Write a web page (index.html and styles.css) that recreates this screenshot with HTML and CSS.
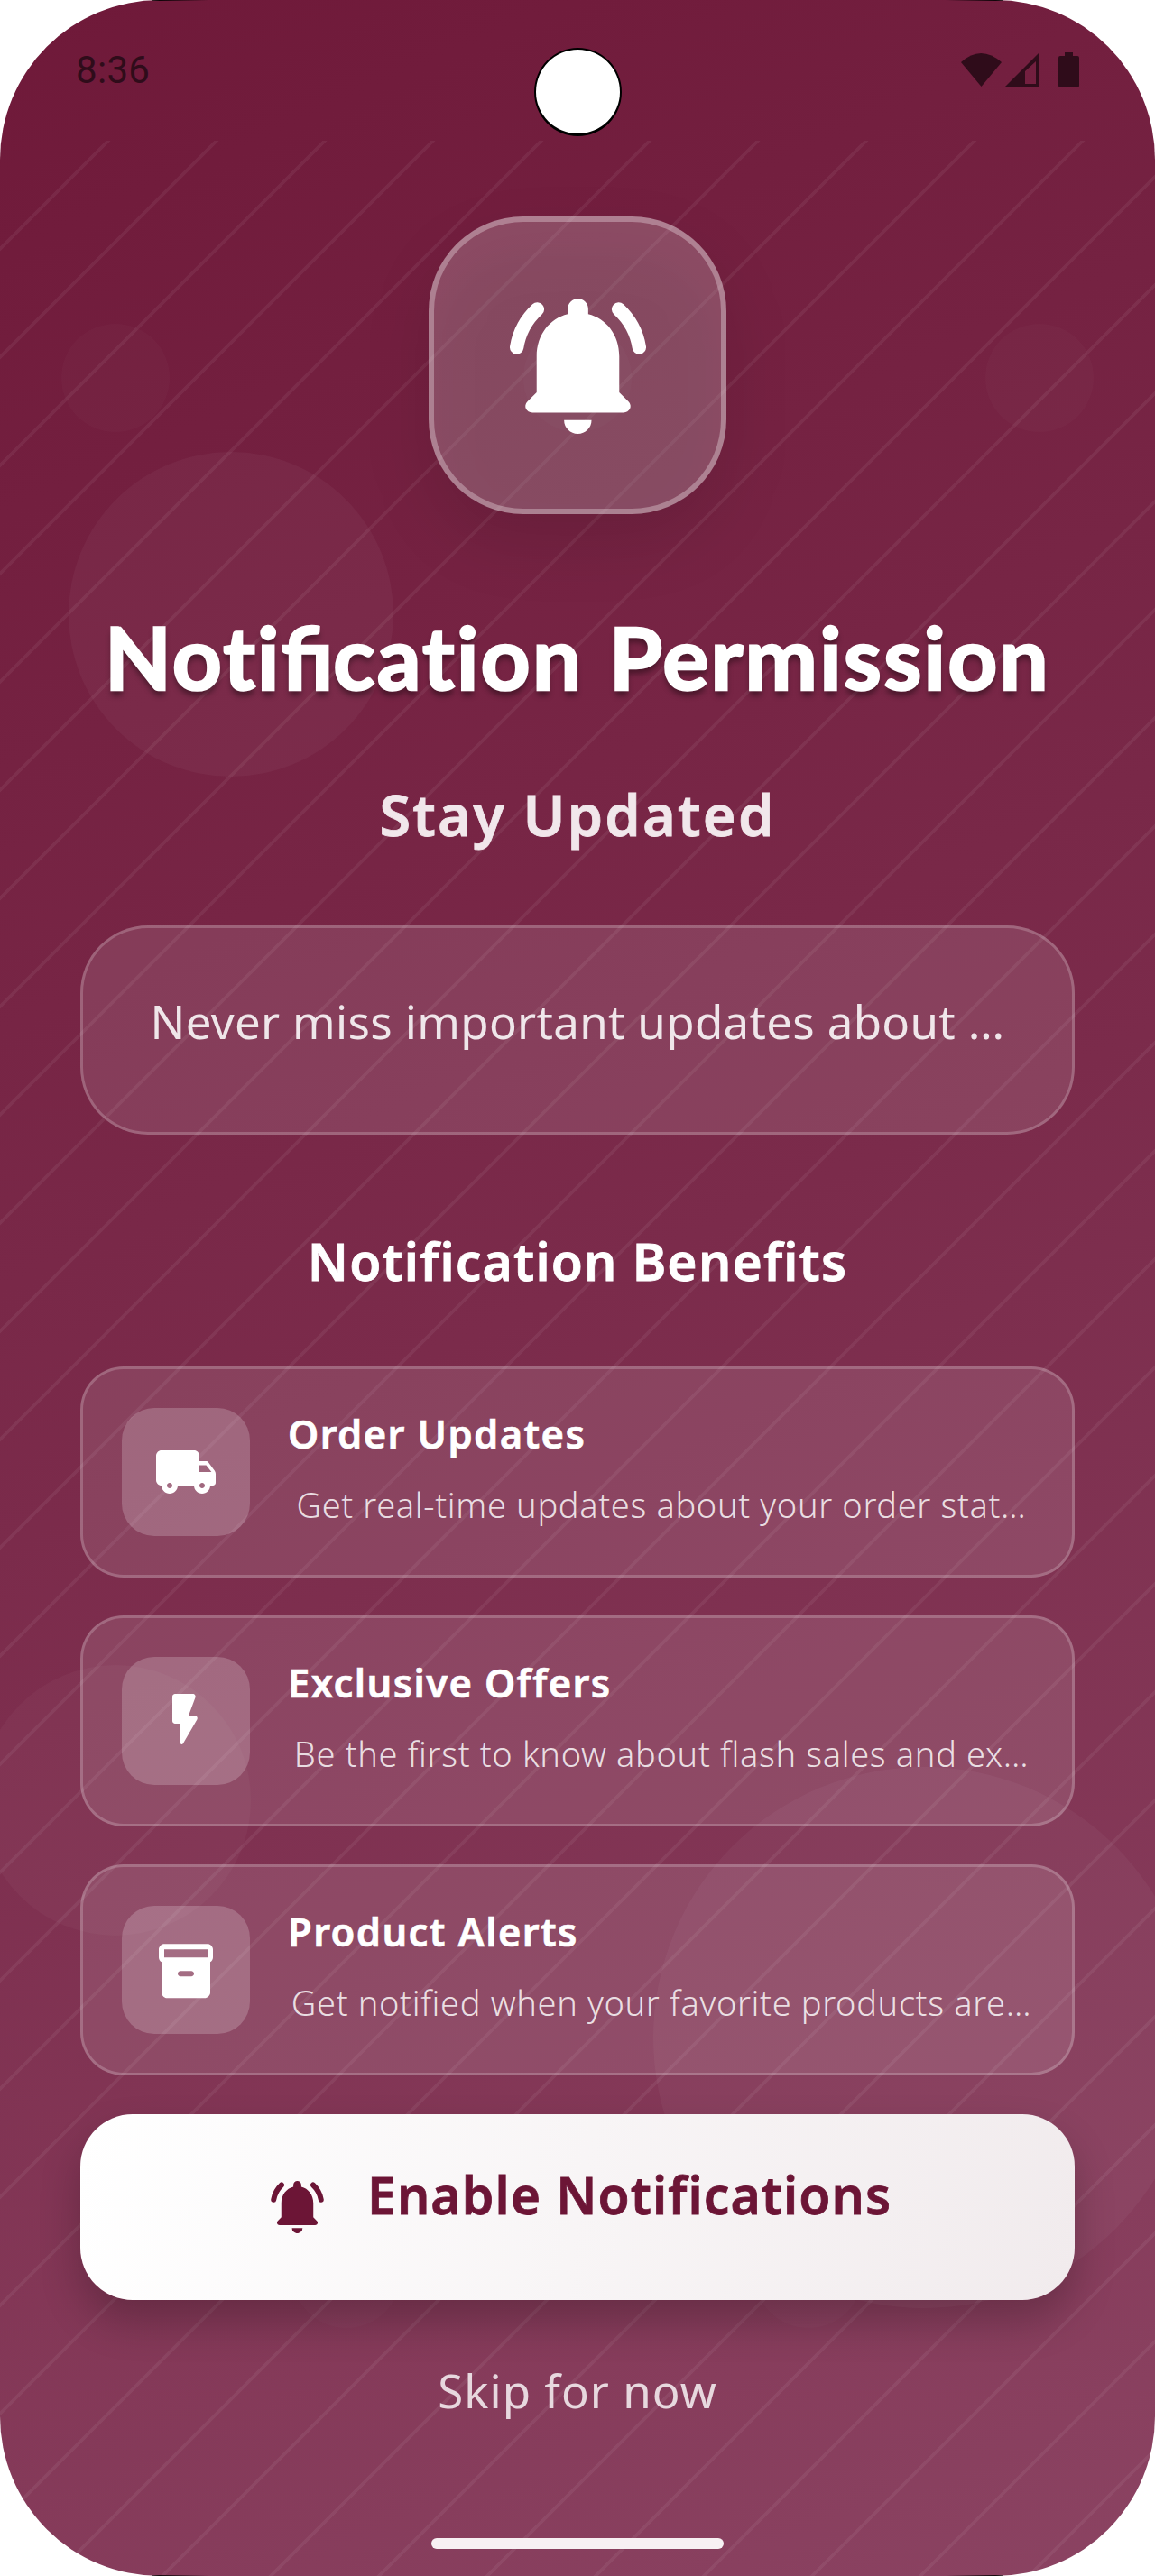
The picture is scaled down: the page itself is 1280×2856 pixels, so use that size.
FILE: index.html
```
<!DOCTYPE html>
<html lang="en">
<head>
<meta charset="utf-8">
<title>Notification Permission</title>
<link rel="stylesheet" href="styles.css">
</head>
<body>
<div class="phone">
  <svg class="backdrop" viewBox="0 0 1280 2856" aria-hidden="true">
    <defs>
      <pattern id="stripes" width="120" height="120" patternUnits="userSpaceOnUse" y="156">
        <path d="M-10 130 L130 -10 M-10 10 L10 -10 M110 130 L130 110" stroke="#fff" stroke-opacity=".06" stroke-width="3.5"/>
      </pattern>
      <linearGradient id="edge"><stop offset="0" stop-color="#000"/><stop offset="1" stop-color="#000" stop-opacity="0"/></linearGradient>
    </defs>
    <rect y="156" width="1280" height="2700" fill="url(#stripes)"/>
    <g fill="#fff">
      <circle cx="256" cy="681" r="180" fill-opacity=".04"/>
      <circle cx="1024" cy="2259" r="300" fill-opacity=".04"/>
      <circle cx="128" cy="1996" r="150" fill-opacity=".03"/>
      <circle cx="128" cy="419" r="60" fill-opacity=".02"/>
      <circle cx="640" cy="419" r="60" fill-opacity=".02"/>
      <circle cx="1152" cy="419" r="60" fill-opacity=".02"/>
      <circle cx="384" cy="2521" r="60" fill-opacity=".02"/>
      <circle cx="896" cy="2521" r="60" fill-opacity=".02"/>
    </g>
    <rect x="168" width="64" height="1" fill="url(#edge)"/>
    <rect x="-1112" width="64" height="1" fill="url(#edge)" transform="scale(-1 1)"/>
    <rect x="168" y="2855" width="64" height="1" fill="url(#edge)"/>
    <rect x="-1112" y="2855" width="64" height="1" fill="url(#edge)" transform="scale(-1 1)"/>
  </svg>

  <svg class="symbols" aria-hidden="true">
    <symbol id="bell" viewBox="315 335 452 448">
      <path fill="currentColor" d="M541 335a34 34 0 0 1 34 34v17c60 15 103 68 103 140v120l30 30c16 16 4 37-16 37H390c-20 0-32-21-16-37l30-30V526c0-72 43-125 103-140v-17a34 34 0 0 1 34-34zM495 738h91a45.500 45.500 0 0 1-91 0z"/>
      <path fill="none" stroke="currentColor" stroke-width="46" stroke-linecap="round" d="M338 496Q350 422 406 370M744 496Q732 422 676 370"/>
    </symbol>
  </svg>

  <header class="status">
    <span class="time">8:36</span>
    <span class="camera"></span>
    <svg class="indicators" viewBox="0 0 132 40">
      <path d="M0 11Q22-9 45 11L22.500 38z"/>
      <path fill-rule="evenodd" d="M49 38L86 1V38zM71 35H83V10L71 21z"/>
      <path d="M115 0h9v4h5q2 0 2 2v31q0 2-2 2h-19q-2 0-2-2v-31q0-2 2-2h5z"/>
    </svg>
  </header>

  <main class="content">
    <div class="hero"><svg><use href="#bell"/></svg></div>
    <h1>Noti<span class="ligature">fi</span>cation Permission</h1>
    <p class="subtitle">Stay Updated</p>
    <div class="message">Never miss important updates about …</div>
    <h2>Notification Benefits</h2>

    <ul class="benefits">
      <li class="card">
        <span class="tile"><svg viewBox="0 0 24 24"><path d="M19.500 8H17V6c0-1.100-.9-2-2-2H3c-1.100 0-2 .9-2 2v9c0 1.100.9 2 2 2 0 1.660 1.340 3 3 3s3-1.340 3-3h6c0 1.660 1.340 3 3 3s3-1.340 3-3h1c.55 0 1-.45 1-1v-3.330c0-.43-.14-.85-.4-1.200L20.300 8.400c-.19-.25-.49-.4-.8-.4zM6 18c-.55 0-1-.45-1-1s.45-1 1-1 1 .45 1 1-.45 1-1 1zm13.500-8.500l1.960 2.500H17V9.500h2.500zM18 18c-.55 0-1-.45-1-1s.45-1 1-1 1 .45 1 1-.45 1-1 1z"/></svg></span>
        <div class="copy"><h3>Order Updates</h3><p>Get real-time updates about your order stat…</p></div>
      </li>
      <li class="card">
        <span class="tile"><svg viewBox="0 0 24 24"><path d="M7 3v9c0 .55.45 1 1 1h2v7.150c0 .51.67.69.93.25l5.190-8.900c.39-.67-.09-1.500-.86-1.500H13l2.490-6.650C15.740 2.700 15.260 2 14.560 2H8c-.55 0-1 .45-1 1z"/></svg></span>
        <div class="copy"><h3>Exclusive Offers</h3><p>Be the first to know about flash sales and ex…</p></div>
      </li>
      <li class="card">
        <span class="tile"><svg viewBox="0 -.4 24 24"><path d="M20 2H4c-1 0-2 .9-2 2v3.010c0 .72.43 1.340 1 1.690V20c0 1.100 1.100 2 2 2h14c.9 0 2-.9 2-2V8.700c.57-.35 1-.97 1-1.690V4c0-1.100-1-2-2-2zm-6 12h-4c-.55 0-1-.45-1-1s.45-1 1-1h4c.55 0 1 .45 1 1s-.45 1-1 1zm6-7H4V4h16v3z"/></svg></span>
        <div class="copy"><h3>Product Alerts</h3><p>Get notified when your favorite products are…</p></div>
      </li>
    </ul>

    <button class="enable"><svg><use href="#bell"/></svg><span>Enable Notifications</span></button>
    <a class="skip">Skip for now</a>
  </main>
  <div class="home-bar"></div>
</div>
</body>
</html>
```
FILE: styles.css
```
* { box-sizing: border-box; }
body { margin: 0; background: #fff; font-family: "Noto Sans", sans-serif; color: #fff; }
h1, h2, h3, p, ul { margin: 0; padding: 0; }

.phone {
  position: relative;
  display: flex;
  flex-direction: column;
  width: 1280px;
  height: 2856px;
  overflow: hidden;
  border-radius: 177px;
  background: linear-gradient(155.860deg, #6f1939, #7b2b4b 50%, #8b4362);
}
.backdrop { position: absolute; inset: 0; width: 1280px; height: 2856px; }
.symbols { position: absolute; width: 0; height: 0; }

.status {
  position: relative;
  display: flex;
  justify-content: space-between;
  height: 156px;
  padding: 53px 83px 0 84px;
  color: #2f0c1a;
}
.time { font: 400 42px/50px Roboto, sans-serif; letter-spacing: .3px; }
.indicators { width: 132px; height: 40px; margin-top: 5px; fill: currentColor; }
.camera {
  position: absolute;
  left: 592px;
  top: 53px;
  width: 97px;
  height: 98px;
  border: solid #000;
  border-width: 2px 2px 3px;
  border-radius: 50%;
  background: #fff;
}

.content {
  position: relative;
  z-index: 0;
  display: flex;
  flex-direction: column;
  align-items: center;
  padding: 84px 89px 0;
}
.hero {
  position: relative;
  display: flex;
  align-items: center;
  justify-content: center;
  width: 330px;
  height: 330px;
  border: 6px solid rgba(255, 255, 255, .3);
  border-radius: 105px;
  background: rgba(255, 255, 255, .2);
}
.hero::before {
  content: "";
  position: absolute;
  inset: 26px -6px -38px;
  z-index: -1;
  border-radius: 105px;
  background: rgba(0, 0, 0, .1);
  filter: blur(34px);
}
.hero svg { width: 151px; height: 150px; margin-top: 2px; }

h1 {
  margin-top: 93px;
  font-family: Lato, sans-serif;
  font-size: 96px;
  line-height: 130px;
  font-weight: 700;
  letter-spacing: 2.200px;
  word-spacing: 3px;
  white-space: nowrap;
  -webkit-text-stroke: 2.500px #fff;
  text-shadow: 0 6px 6px rgba(0, 0, 0, .4);
}
.ligature { letter-spacing: 0; }
.subtitle {
  margin-top: 67px;
  font-size: 63px;
  line-height: 86px;
  font-weight: 600;
  letter-spacing: 2.200px;
  -webkit-text-stroke: .800px currentColor;
  color: #f1e7eb;
}
.message {
  width: 100%;
  height: 232px;
  margin-top: 80px;
  padding-top: 68px;
  border: 3px solid rgba(255, 255, 255, .2);
  border-radius: 75px;
  background: rgba(255, 255, 255, .11);
  font-size: 51px;
  line-height: 70px;
  letter-spacing: .330px;
  text-align: center;
  white-space: nowrap;
  color: rgba(255, 255, 255, .87);
}
h2 {
  margin-top: 101px;
  font-size: 57px;
  line-height: 78px;
  font-weight: 600;
  letter-spacing: 1.180px;
  -webkit-text-stroke: .800px currentColor;
}

.benefits {
  display: flex;
  flex-direction: column;
  gap: 42px;
  width: 100%;
  margin-top: 78px;
  list-style: none;
}
.card {
  display: flex;
  gap: 42px;
  height: 234px;
  padding: 43px 41px 0 43px;
  border: 3px solid rgba(255, 255, 255, .2);
  border-radius: 48px;
  background: rgba(255, 255, 255, .11);
}
.tile {
  display: flex;
  flex: none;
  align-items: center;
  justify-content: center;
  width: 142px;
  height: 142px;
  border-radius: 36px;
  background: rgba(255, 255, 255, .2);
}
.tile svg { width: 72px; height: 72px; fill: #fff; }
.copy { flex: 1; margin-top: -2px; white-space: nowrap; }
.copy h3 {
  font-size: 43.500px;
  line-height: 60px;
  font-weight: 600;
  letter-spacing: 1.400px;
  -webkit-text-stroke: .700px currentColor;
}
.copy p {
  margin-top: 23px;
  font-size: 38px;
  line-height: 52px;
  font-weight: 300;
  letter-spacing: .650px;
  text-align: center;
  color: rgba(255, 255, 255, .84);
}

.enable {
  display: flex;
  gap: 48px;
  width: 100%;
  height: 206px;
  margin-top: 43px;
  padding: 0 0 0 211px;
  border: 0;
  border-radius: 58px;
  background: linear-gradient(100deg, #fff, #f1ebed);
  box-shadow: 0 24px 45px rgba(0, 0, 0, .22);
  color: #6c1536;
  font: 600 57px/78px "Noto Sans", sans-serif;
  letter-spacing: 1.100px;
  white-space: nowrap;
}
.enable svg { width: 59px; height: 58px; margin-top: 74px; }
.enable span { margin-top: 50px; -webkit-text-stroke: .800px currentColor; }
.skip {
  margin-top: 65px;
  font-size: 51px;
  line-height: 70px;
  letter-spacing: 1.040px;
  color: rgba(255, 255, 255, .8);
}
.home-bar {
  position: absolute;
  left: 478px;
  bottom: 30px;
  width: 324px;
  height: 12px;
  border-radius: 6px;
  background: #f7f0f3;
}
```
